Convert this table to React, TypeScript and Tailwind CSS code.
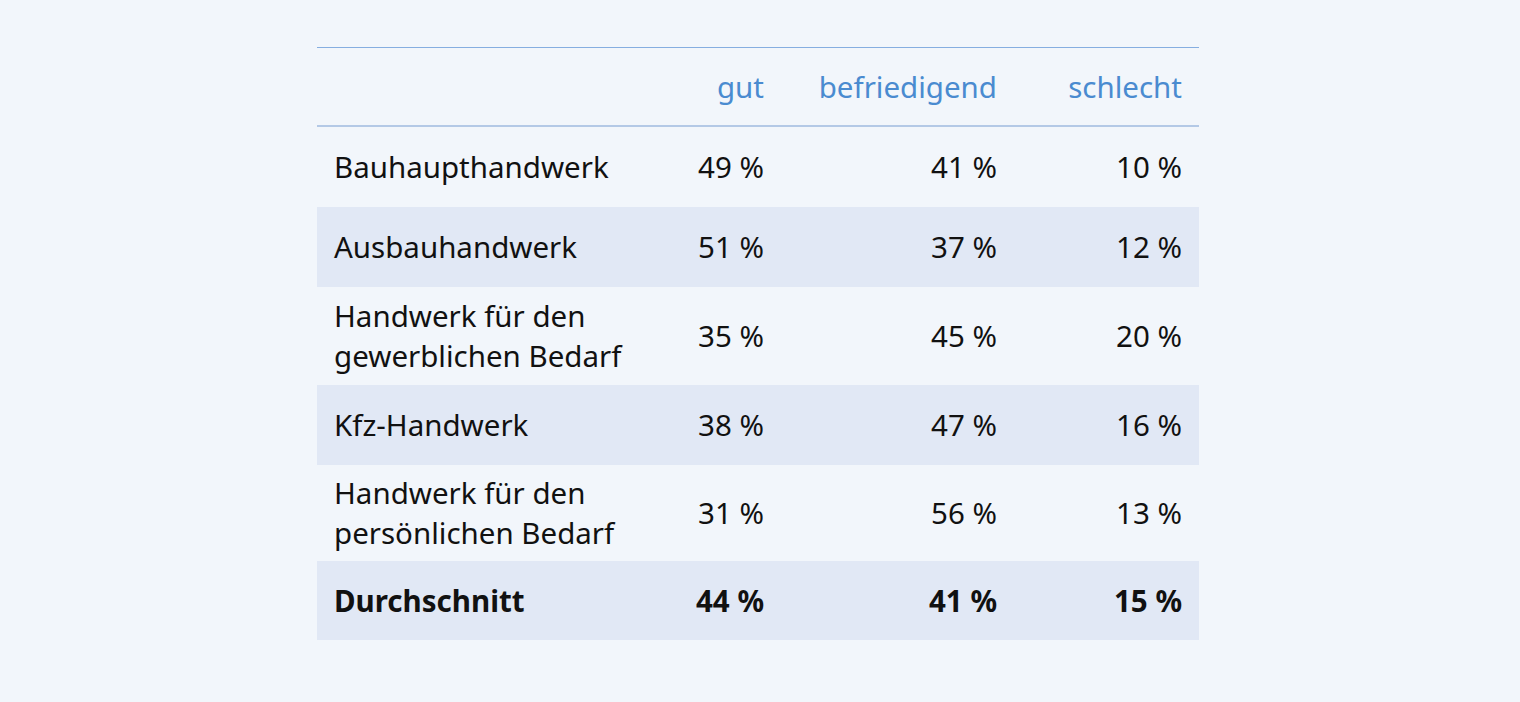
const rows = [
  { label: ["Bauhaupthandwerk"], vals: ["49 %", "41 %", "10 %"], h: "h-[80px]", band: false },
  { label: ["Ausbauhandwerk"], vals: ["51 %", "37 %", "12 %"], h: "h-[80px]", band: true },
  { label: ["Handwerk für den", "gewerblichen Bedarf"], vals: ["35 %", "45 %", "20 %"], h: "h-[98px]", band: false },
  { label: ["Kfz-Handwerk"], vals: ["38 %", "47 %", "16 %"], h: "h-[80px]", band: true },
  { label: ["Handwerk für den", "persönlichen Bedarf"], vals: ["31 %", "56 %", "13 %"], h: "h-[96px]", band: false },
];

const cols = "grid grid-cols-[333px_131px_233px_185px] items-center";

export default function App() {
  return (
    <main
      className="min-h-screen bg-[#f2f6fb] text-[#111] pt-[47px]"
      style={{ fontFamily: '"Noto Sans", "Open Sans", sans-serif' }}
    >
      <div className="mx-auto w-[882px] translate-x-[-2px] text-[29.5px] leading-[40px]">
        <div className={`${cols} h-[80px] border-t border-b-2 border-t-[#86aee0] border-b-[#b4c9e6] text-[#4a8bd0]`}>
          <div />
          <div className="text-right pr-[17px]">gut</div>
          <div className="text-right pr-[17px]">befriedigend</div>
          <div className="text-right pr-[17px]">schlecht</div>
        </div>

        {rows.map((r) => (
          <div key={r.label.join(" ")} className={`${cols} ${r.h} ${r.band ? "bg-[#e1e8f5]" : ""}`}>
            <div className="pl-[17px]">
              {r.label.map((l) => (
                <div key={l}>{l}</div>
              ))}
            </div>
            {r.vals.map((v, i) => (
              <div key={i} className="text-right pr-[17px]">
                {v}
              </div>
            ))}
          </div>
        ))}

        <div className={`${cols} h-[79px] bg-[#e1e8f5] font-bold`}>
          <div className="pl-[17px]">Durchschnitt</div>
          <div className="text-right pr-[17px]">44 %</div>
          <div className="text-right pr-[17px]">41 %</div>
          <div className="text-right pr-[17px]">15 %</div>
        </div>
      </div>
    </main>
  );
}
